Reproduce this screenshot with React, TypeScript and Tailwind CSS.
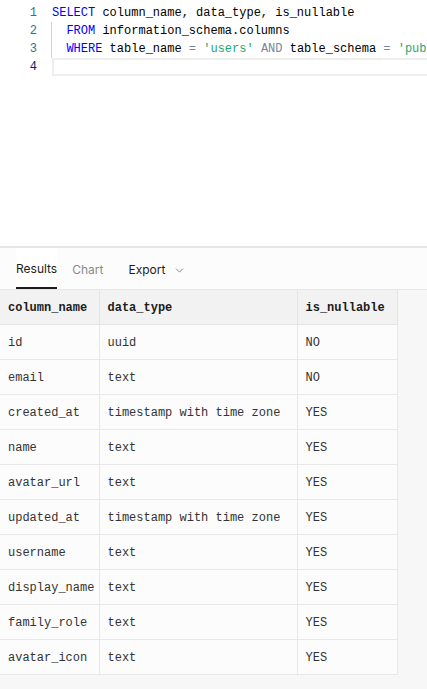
import { ChevronDown } from "lucide-react";

const mono = "font-['Consolas','Liberation_Mono',monospace]";

const rows: [string, string, string][] = [
  ["id", "uuid", "NO"],
  ["email", "text", "NO"],
  ["created_at", "timestamp with time zone", "YES"],
  ["name", "text", "YES"],
  ["avatar_url", "text", "YES"],
  ["updated_at", "timestamp with time zone", "YES"],
  ["username", "text", "YES"],
  ["display_name", "text", "YES"],
  ["family_role", "text", "YES"],
  ["avatar_icon", "text", "YES"],
];

const Kw = ({ children }: { children: string }) => (
  <span className="text-[#0000ff]">{children}</span>
);
const Op = ({ children }: { children: string }) => (
  <span className="text-[#778899]">{children}</span>
);
const Str = ({ children }: { children: string }) => (
  <span className="text-[#1ea672]">{children}</span>
);

const Editor = () => {
  return (
    <div className={`h-[246px] bg-white ${mono} text-[12px] leading-[18px] pt-[4px] overflow-hidden`}>
      <div className="flex">
        <div className="w-[37px] shrink-0 text-right text-[#237893]">
          <div>1</div>
          <div>2</div>
          <div>3</div>
          <div className="text-[#0b216f]">4</div>
        </div>
        <div className="ml-[15px] flex-1 text-black whitespace-pre">
          <div>
            <Kw>SELECT</Kw> column_name, data_type, is_nullable
          </div>
          <div className="border-l border-[#d3d3d3] -ml-px">
            {"  "}
            <Kw>FROM</Kw> information_schema.columns
          </div>
          <div className="border-l border-[#d3d3d3] -ml-px">
            {"  "}
            <Kw>WHERE</Kw> table_name <Op>=</Op> <Str>'users'</Str> <Op>AND</Op> table_schema <Op>=</Op>{" "}
            <Str>'public'</Str>;
          </div>
          <div className="h-[18px] border-2 border-r-0 border-[#eeeeee]" />
        </div>
      </div>
    </div>
  );
};

const Tabs = () => {
  return (
    <div className="h-[44px] border-t-2 border-b border-[#e6e6e6] bg-[#fcfcfc] flex items-stretch pl-4 font-['Inter','Liberation_Sans',sans-serif] text-[12px]">
      <div className="flex items-center pt-[3px] bg-white border-b-2 border-[#1c1c1c] text-[#1c1c1c]">
        Results
      </div>
      <div className="flex items-center pt-[3px] ml-[15px] text-[#8a8a8a]">Chart</div>
      <div className="flex items-center pt-[3px] ml-[25px] text-[#1c1c1c] gap-[8px]">
        Export
        <ChevronDown className="h-[13px] w-[13px] text-[#707070]" strokeWidth={1.5} />
      </div>
    </div>
  );
};

const ResultsTable = () => {
  return (
    <div className="bg-[#f7f7f7] pb-[15px]">
      <table className={`table-fixed border-collapse ${mono} text-[12px]`}>
        <thead>
          <tr className="h-[34px] bg-[#f2f2f2]">
            <th className="w-[99px] pl-2 pt-[2px] text-left font-bold text-[#1c1c1c] border border-l-0 border-t-0 border-[#e4e4e4]">
              column_name
            </th>
            <th className="w-[198px] pl-2 pt-[2px] text-left font-bold text-[#1c1c1c] border border-t-0 border-[#e4e4e4]">
              data_type
            </th>
            <th className="w-[100px] pl-2 pt-[2px] text-left font-bold text-[#1c1c1c] border border-t-0 border-[#e4e4e4]">
              is_nullable
            </th>
          </tr>
        </thead>
        <tbody>
          {rows.map(([name, type, nullable]) => (
            <tr key={name} className="h-[35px] bg-[#fcfcfc] text-[#333333]">
              <td className="pl-2 pt-[2px] border border-l-0 border-[#e8e8e8] whitespace-nowrap overflow-hidden">{name}</td>
              <td className="pl-2 pt-[2px] border border-[#e8e8e8]">{type}</td>
              <td className="pl-2 pt-[2px] border border-[#e8e8e8]">{nullable}</td>
            </tr>
          ))}
        </tbody>
      </table>
    </div>
  );
};

export default function App() {
  return (
    <div className="w-[427px] h-[689px] overflow-hidden bg-[#f7f7f7]">
      <Editor />
      <Tabs />
      <ResultsTable />
    </div>
  );
}
